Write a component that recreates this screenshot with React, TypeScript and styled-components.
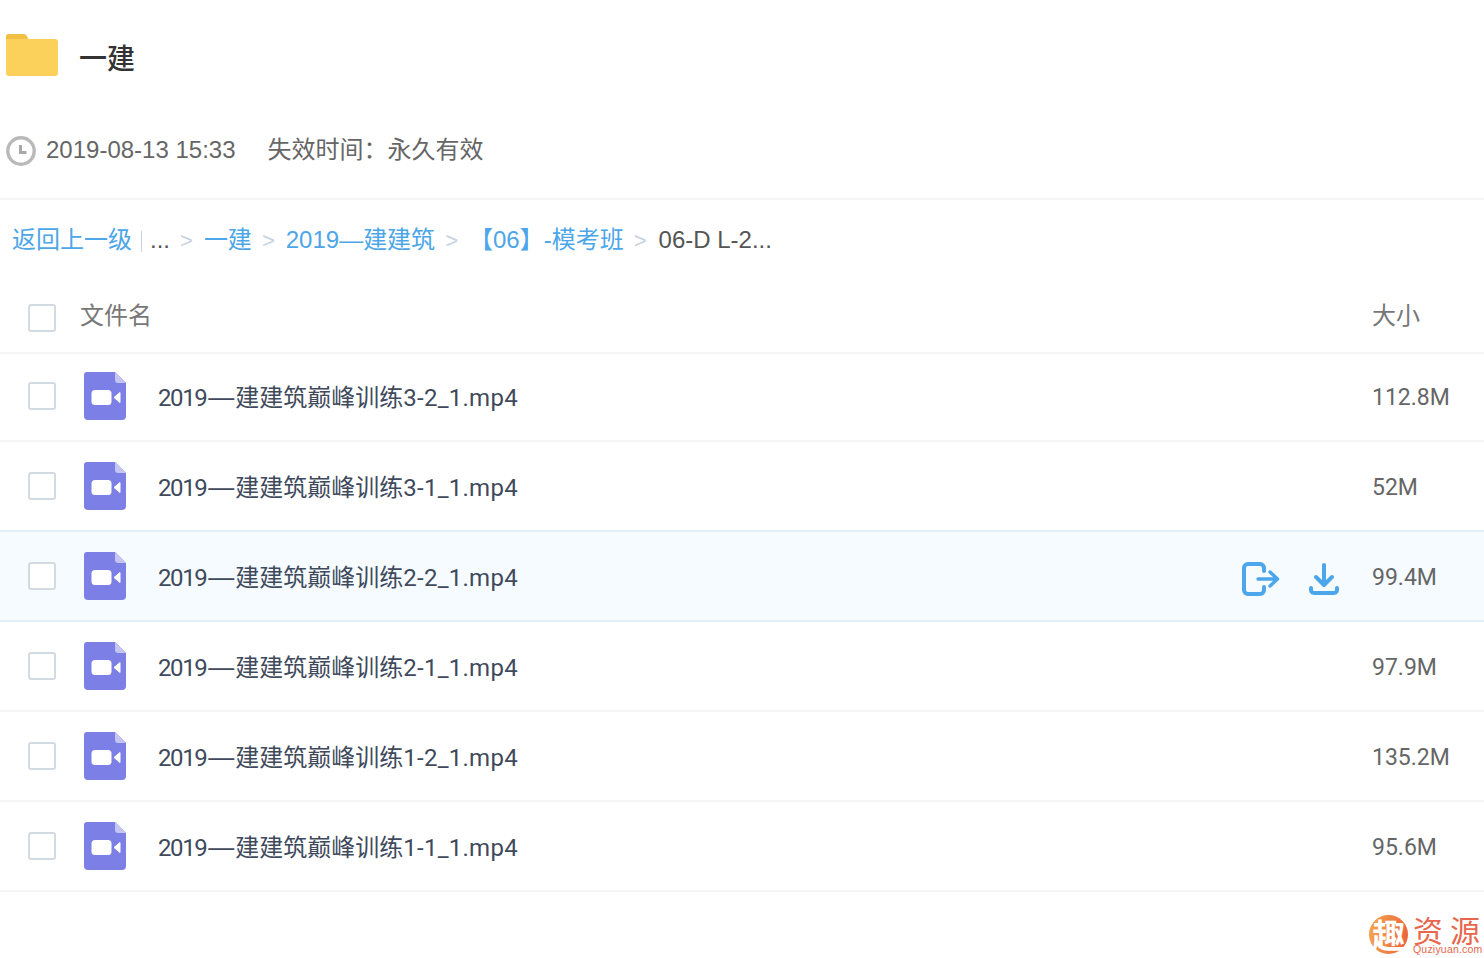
import React from "react";
import styled, { createGlobalStyle } from "styled-components";

const Global = createGlobalStyle`
  html, body { margin: 0; padding: 0; background: #fff; }
  body { font-family: "Liberation Sans", "Noto Sans CJK SC", sans-serif; height: 958px; overflow: hidden; }
`;

const Page = styled.div`
  position: relative;
  width: 1484px;
  height: 958px;
  overflow: hidden;
  background: #fff;
`;

const TitleBar = styled.div`
  display: flex;
  align-items: center;
  height: 116px;
  padding-left: 6px;
  gap: 21px;
`;

const FolderIcon = styled.svg`
  flex: none;
  margin-top: -6px;
`;

const Title = styled.h1`
  margin: -2px 0 0;
  font: 500 28px/1 "Noto Sans CJK SC", sans-serif;
  color: #333;
`;

const MetaBar = styled.div`
  display: flex;
  align-items: baseline;
  height: 84px;
  padding: 18px 0 0 6px;
  box-sizing: border-box;
  border-bottom: 2px solid #f4f5f6;
  font-size: 24px;
  line-height: 32px;
  color: #666;
`;

const ClockIcon = styled.svg`
  flex: none;
  align-self: flex-start;
  margin-top: 2px;
`;

const MetaDate = styled.span`
  margin-left: 10px;
  margin-right: 32px;
`;

const Crumbs = styled.nav`
  display: flex;
  align-items: baseline;
  height: 82px;
  padding: 24px 0 0 12px;
  box-sizing: border-box;
  font-size: 24px;
  line-height: 32px;
  white-space: nowrap;
`;

const CrumbLink = styled.span`
  color: #4ca6e8;
`;

const CrumbPlain = styled.span`
  color: #555;
`;

const CrumbDivider = styled.i`
  align-self: flex-start;
  width: 1px;
  height: 21px;
  margin: 7px 8px 0 9px;
  background: #c8d4e2;
`;

const CrumbSep = styled.span<{ $after?: number }>`
  color: #c6d2e0;
  margin: 0 ${(p) => p.$after ?? 11}px 0 10px;
  font-size: 22px;
`;

const HeaderRow = styled.div`
  display: flex;
  align-items: center;
  height: 72px;
  padding: 2px 34px 0 28px;
  box-sizing: border-box;
  border-bottom: 2px solid #f4f5f6;
  font: 24px/1 "Noto Sans CJK SC", sans-serif;
  color: #777;
`;

const HeaderName = styled.span`
  flex: 1;
  margin-left: 24px;
  margin-bottom: 8px;
`;

const SizeHead = styled.span`
  width: 78px;
  margin-bottom: 8px;
`;

const Box = styled.span`
  flex: none;
  width: 24px;
  height: 24px;
  border: 2px solid #d4dae2;
  border-radius: 3px;
  background: #fff;
`;

const Row = styled.div<{ $active?: boolean; $first?: boolean }>`
  display: flex;
  align-items: center;
  height: ${(p) => (p.$first ? "88px" : "90px")};
  padding: 0 34px ${(p) => (p.$first ? "2px" : "0")} 28px;
  box-sizing: border-box;
  border-bottom: 2px solid ${(p) => (p.$active ? "#e2eef8" : "#f4f5f6")};
  background: ${(p) => (p.$active ? "#f5fbff" : "#fff")};
  ${(p) => p.$active && "box-shadow: 0 -2px 0 #e2eef8;"}
`;

const FileIcon = styled.svg`
  flex: none;
  margin-left: 27px;
`;

const FileName = styled.span`
  flex: 1;
  margin-left: 31px;
  margin-top: 2px;
  font: 24px/1 "Noto Sans CJK SC", sans-serif;
  color: #3f4a5c;
  white-space: nowrap;
`;

const Latin = styled.span<{ $year?: boolean }>`
  font-family: Roboto, sans-serif;
  letter-spacing: ${(p) => (p.$year ? "-1.4px" : "0.25px")};
`;

const Dash = styled.span`
  font-family: "Liberation Sans", sans-serif;
  font-size: 26px;
  margin: 0 1px 0 2px;
`;

const Actions = styled.div`
  display: flex;
  align-items: center;
  gap: 29px;
  margin: 5px 33px 0 0;
`;

const Size = styled.span`
  width: 78px;
  margin-top: 2px;
  font: 23px/1 Roboto, sans-serif;
  color: #666;
`;

const Mark = styled.div`
  position: absolute;
  right: 4px;
  bottom: 4px;
  display: flex;
  align-items: center;
  gap: 5px;
`;

const MarkBadge = styled.span`
  display: flex;
  align-items: center;
  justify-content: center;
  width: 39px;
  height: 39px;
  border-radius: 50%;
  background: linear-gradient(100deg, #f4a94a, #ec5f40);
  color: #fff;
  font: 700 33px/39px "Noto Sans CJK SC", sans-serif;
`;

const MarkText = styled.div`
  display: flex;
  flex-direction: column;
  align-items: stretch;
  width: 67px;
  color: #e8674c;
`;

const MarkCn = styled.div`
  display: flex;
  justify-content: space-between;
  font: 30px/30px "Noto Sans CJK SC", sans-serif;
  height: 30px;
`;

const MarkEn = styled.span`
  font: 10.5px/10px "Liberation Sans", sans-serif;
  letter-spacing: 0.2px;
  white-space: nowrap;
`;

const Folder = () => (
  <FolderIcon width="52" height="42" viewBox="0 0 52 42">
    <path d="M0 3a3 3 0 0 1 3-3h14c2 0 4 1 5 5h27a3 3 0 0 1 3 3v31a3 3 0 0 1-3 3H3a3 3 0 0 1-3-3z" fill="#fbd15b" />
    <path d="M0 3a3 3 0 0 1 3-3h14c2 0 4 1 5 5H0z" fill="#f2bf45" />
  </FolderIcon>
);

const Clock = () => (
  <ClockIcon width="30" height="30" viewBox="0 0 30 30">
    <circle cx="15" cy="15" r="13.200" fill="none" stroke="#b9b9b9" strokeWidth="3.400" />
    <path d="M14.500 9v7.500h6" fill="none" stroke="#a8a8a8" strokeWidth="3" />
  </ClockIcon>
);

const Video = () => (
  <FileIcon width="44" height="50" viewBox="0 0 44 50">
    <path d="M4 1h28l11 11v33a4 4 0 0 1-4 4H5a4 4 0 0 1-4-4V4a3 3 0 0 1 3-3z" fill="#7b7fe6" />
    <path d="M32 1l11 11h-8a3 3 0 0 1-3-3z" fill="#c3c5f4" />
    <rect x="8.500" y="19" width="20" height="15" rx="3.500" fill="#fff" />
    <path d="M31 26.500l6-5v10z" fill="#fff" stroke="#fff" strokeWidth="1" strokeLinejoin="round" />
  </FileIcon>
);

const ShareIcon = () => (
  <svg width="38" height="34" viewBox="0 0 38 34">
    <path d="M18 2H6a4 4 0 0 0-4 4v22a4 4 0 0 0 4 4h12a4 4 0 0 0 4-4v-3M22 9V6a4 4 0 0 0-4-4" fill="none" stroke="#4ca6ec" strokeWidth="4" strokeLinecap="round" />
    <path d="M16 17h19M28 10l7.500 7-7.500 7" fill="none" stroke="#4ca6ec" strokeWidth="3.400" strokeLinecap="round" strokeLinejoin="round" />
  </svg>
);

const DownloadIcon = () => (
  <svg width="30" height="32" viewBox="0 0 30 32">
    <path d="M15 2v19M7 14l8 8 8-8" fill="none" stroke="#4ca6ec" strokeWidth="4" strokeLinecap="round" strokeLinejoin="round" />
    <path d="M2 25v2a3 3 0 0 0 3 3h20a3 3 0 0 0 3-3v-2" fill="none" stroke="#4ca6ec" strokeWidth="4" strokeLinecap="round" />
  </svg>
);

const Name = ({ tail }: { tail: string }) => (
  <FileName>
    <Latin $year>2019</Latin>
    <Dash>—</Dash>
    <span>建建筑巅峰训练</span>
    <Latin>{tail}</Latin>
  </FileName>
);

const files = [
  { tail: "3-2_1.mp4", size: "112.8M" },
  { tail: "3-1_1.mp4", size: "52M" },
  { tail: "2-2_1.mp4", size: "99.4M", active: true },
  { tail: "2-1_1.mp4", size: "97.9M" },
  { tail: "1-2_1.mp4", size: "135.2M" },
  { tail: "1-1_1.mp4", size: "95.6M" },
];

export default function App() {
  return (
    <Page>
      <Global />
      <TitleBar>
        <Folder />
        <Title>一建</Title>
      </TitleBar>
      <MetaBar>
        <Clock />
        <MetaDate>2019-08-13 15:33</MetaDate>
        <span>失效时间：永久有效</span>
      </MetaBar>
      <Crumbs>
        <CrumbLink>返回上一级</CrumbLink>
        <CrumbDivider />
        <CrumbPlain>...</CrumbPlain>
        <CrumbSep>&gt;</CrumbSep>
        <CrumbLink>一建</CrumbLink>
        <CrumbSep>&gt;</CrumbSep>
        <CrumbLink>2019—建建筑</CrumbLink>
        <CrumbSep>&gt;</CrumbSep>
        <CrumbLink>【06】-模考班</CrumbLink>
        <CrumbSep $after={12}>&gt;</CrumbSep>
        <CrumbPlain>06-D L-2...</CrumbPlain>
      </Crumbs>
      <HeaderRow>
        <Box />
        <HeaderName>文件名</HeaderName>
        <SizeHead>大小</SizeHead>
      </HeaderRow>
      {files.map((f, i) => (
        <Row key={f.tail} $active={f.active} $first={i === 0}>
          <Box />
          <Video />
          <Name tail={f.tail} />
          {f.active && (
            <Actions>
              <ShareIcon />
              <DownloadIcon />
            </Actions>
          )}
          <Size>{f.size}</Size>
        </Row>
      ))}
      <Mark>
        <MarkBadge>趣</MarkBadge>
        <MarkText>
          <MarkCn>
            <span>资</span>
            <span>源</span>
          </MarkCn>
          <MarkEn>Quziyuan.com</MarkEn>
        </MarkText>
      </Mark>
    </Page>
  );
}
